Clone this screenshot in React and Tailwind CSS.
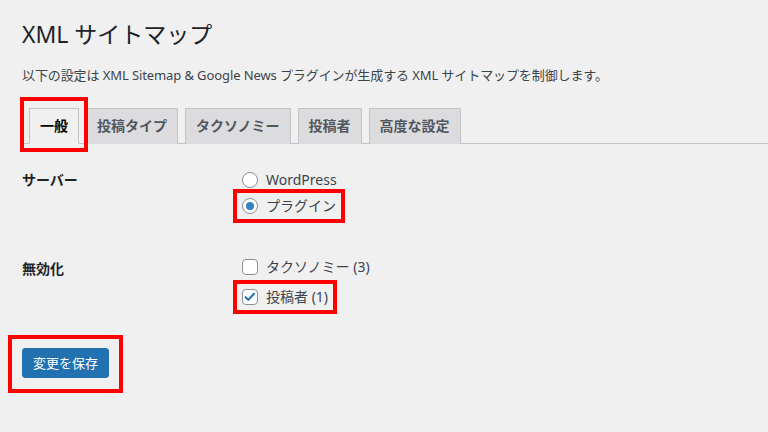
import React from 'react';

const font = { fontFamily: '"Noto Sans", "Noto Sans CJK JP", sans-serif' };

const tabs = ['一般', '投稿タイプ', 'タクソノミー', '投稿者', '高度な設定'];

function Radio({ checked }) {
  return (
    <span className="w-4 h-4 rounded-full border border-[#8c8f94] bg-white flex items-center justify-center shrink-0">
      {checked && <span className="w-2 h-2 rounded-full bg-[#3582c4]" />}
    </span>
  );
}

function Checkbox({ checked }) {
  return (
    <span className="w-4 h-4 rounded-[4px] border border-[#8c8f94] bg-white flex items-center justify-center shrink-0">
      {checked && (
        <svg viewBox="0 0 16 16" className="w-[14px] h-[14px]">
          <path d="M3 8.2l3 3.1 6.6-7" fill="none" stroke="#2271b1" strokeWidth="2.4" strokeLinecap="round" strokeLinejoin="round" />
        </svg>
      )}
    </span>
  );
}

export default function App() {
  return (
    <div className="relative w-[768px] h-[432px] bg-[#f0f0f1] text-[#1d2327] overflow-hidden" style={font}>
      <div className="ml-[22px] pt-[10px]">
        {/* Title */}
        <h1 className="text-[23px] leading-[30px] font-normal pt-[9px] pb-[4px]">XML サイトマップ</h1>
        <p className="text-[13px] leading-[19.5px] mt-[13px] text-[#3c434a] tracking-[-0.1px]">
          以下の設定は XML Sitemap &amp; Google News プラグインが生成する XML サイトマップを制御します。
        </p>

        {/* Tabs */}
        <div className="mt-[13px] pt-[9px] flex border-b border-[#c3c4c7]">
          {tabs.map((t, i) => (
            <div
              key={t}
              className={
                i === 0
                  ? 'ml-[7px] -mb-px px-[10px] py-[5px] text-[14px] leading-[24px] font-semibold border border-[#c3c4c7] border-b-[#f0f0f1] bg-[#f0f0f1] text-black'
                  : 'ml-[7px] -mb-px px-[10px] py-[5px] text-[14px] leading-[24px] font-semibold border border-[#c3c4c7] border-b-0 bg-[#dcdcde] text-[#50575e]'
              }
            >
              {t}
            </div>
          ))}
        </div>

        {/* Form rows */}
        <div className="mt-[7px] text-[14px]">
          <div className="flex">
            <div className="w-[220px] pt-[20px] font-semibold leading-[18px]">サーバー</div>
            <div className="pt-[21px] flex flex-col gap-[10px] text-[#3c434a]">
              <label className="flex items-center gap-[8px] leading-[16px]">
                <Radio />
                <span>WordPress</span>
              </label>
              <label className="flex items-center gap-[8px] leading-[16px]">
                <Radio checked />
                <span>プラグイン</span>
              </label>
            </div>
          </div>

          <div className="flex mt-[45px]">
            <div className="w-[220px] pt-[1px] font-semibold leading-[18px]">無効化</div>
            <div className="flex flex-col gap-[14px] text-[#3c434a]">
              <label className="flex items-center gap-[8px] leading-[16px]">
                <Checkbox />
                <span>タクソノミー (3)</span>
              </label>
              <label className="flex items-center gap-[8px] leading-[16px]">
                <Checkbox checked />
                <span>投稿者 (1)</span>
              </label>
            </div>
          </div>

          <button className="mt-[43px] h-[30px] px-[10px] rounded-[3px] bg-[#2271b1] border border-[#2271b1] text-white text-[13px] leading-[28px]">
            変更を保存
          </button>
        </div>
      </div>

      {/* Red annotation boxes */}
      <div className="absolute left-[20px] top-[97px] w-[68px] h-[55px] border-4 border-[#ff0000]" />
      <div className="absolute left-[233px] top-[189px] w-[112px] h-[34px] border-4 border-[#ff0000]" />
      <div className="absolute left-[233px] top-[280px] w-[104px] h-[34px] border-4 border-[#ff0000]" />
      <div className="absolute left-[8px] top-[335px] w-[115px] h-[58px] border-4 border-[#ff0000]" />
    </div>
  );
}
